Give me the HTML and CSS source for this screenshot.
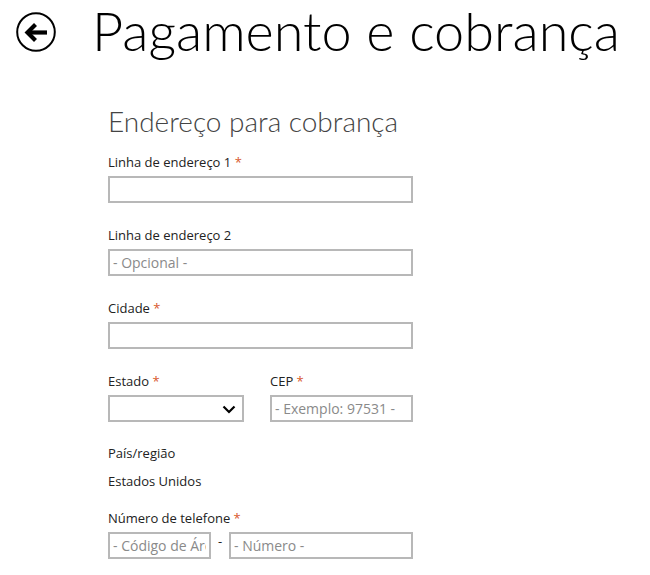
FILE: index.html
```html
<!DOCTYPE html>
<html lang="pt">
<head>
<meta charset="utf-8">
<title>Pagamento e cobrança</title>
<link rel="stylesheet" href="styles.css">
</head>
<body>
<header class="page-header">
  <button class="back-button" aria-label="Voltar">
    <svg width="40" height="40" viewBox="0 0 40 40">
      <circle cx="20" cy="20" r="18.8" fill="none" stroke="#000" stroke-width="2"/>
      <path d="M12 20.5H31" stroke="#000" stroke-width="4.2" fill="none"/>
      <path d="M19.5 12.5L11.5 20.5L19.5 28.5" stroke="#000" stroke-width="4.2" fill="none"/>
    </svg>
  </button>
  <h1 class="page-title">Pagamento e cobrança</h1>
</header>

<main class="form-area">
  <h2 class="section-title">Endereço para cobrança</h2>

  <div class="field">
    <label class="field-label">Linha de endereço 1 <span class="req">*</span></label>
    <input class="text-input" type="text">
  </div>

  <div class="field">
    <label class="field-label">Linha de endereço 2</label>
    <input class="text-input" type="text" placeholder="- Opcional -">
  </div>

  <div class="field">
    <label class="field-label">Cidade <span class="req">*</span></label>
    <input class="text-input" type="text">
  </div>

  <div class="field-row">
    <div class="field state-field">
      <label class="field-label">Estado <span class="req">*</span></label>
      <div class="select-wrap">
        <select class="select-input"><option></option></select>
        <svg class="chevron" width="14" height="10" viewBox="0 0 14 10">
          <path d="M1.5 2.5L7 8L12.5 2.5" fill="none" stroke="#000" stroke-width="2.2"/>
        </svg>
      </div>
    </div>
    <div class="field zip-field">
      <label class="field-label">CEP <span class="req">*</span></label>
      <input class="text-input" type="text" placeholder="- Exemplo: 97531 -">
    </div>
  </div>

  <div class="info">
    <div class="info-label">País/região</div>
    <div class="info-value">Estados Unidos</div>
  </div>

  <div class="field">
    <label class="field-label">Número de telefone <span class="req">*</span></label>
    <div class="phone-row">
      <input class="text-input area-input" type="text" placeholder="- Código de Área -">
      <span class="dash">-</span>
      <input class="text-input number-input" type="text" placeholder="- Número -">
    </div>
  </div>
</main>
</body>
</html>
```

FILE: styles.css
```css
* {
  box-sizing: border-box;
}

html, body {
  margin: 0;
  padding: 0;
  background: #fff;
}

body {
  font-family: "Open Sans", "Noto Sans", "Liberation Sans", sans-serif;
  color: #222;
}

.page-header {
  display: flex;
  align-items: flex-start;
  padding: 1px 0 0 16px;
}

.back-button {
  width: 40px;
  height: 40px;
  margin-top: 11px;
  padding: 0;
  border: 0;
  background: none;
  display: block;
  flex: none;
}

.back-button svg {
  display: block;
}

.page-title {
  margin: 0 0 0 36px;
  font-family: "Lato", "Open Sans", sans-serif;
  font-size: 54px;
  line-height: 60px;
  font-weight: 300;
  color: #000;
}

.form-area {
  padding-left: 108px;
  width: 413px;
  box-sizing: content-box;
}

.section-title {
  margin: 43px 0 15px 0;
  font-family: "Lato", "Open Sans", sans-serif;
  font-size: 28px;
  line-height: 34px;
  font-weight: 300;
  color: #444;
}

.field {
  display: flex;
  flex-direction: column;
  margin-bottom: 23px;
}

.field-label {
  font-size: 13px;
  line-height: 18px;
  margin-bottom: 5px;
  color: #222;
}

.req {
  color: #d8582c;
}

.text-input,
.select-input {
  height: 27px;
  border: 2px solid #b8b8b8;
  border-radius: 0;
  padding: 0 3px;
  font-family: inherit;
  font-size: 14px;
  color: #222;
  background: #fff;
  outline: none;
  width: 305px;
}

.text-input::placeholder {
  color: #8a8a8a;
  opacity: 1;
}

.field-row {
  display: flex;
  gap: 26px;
}

.field-row .field {
  margin-bottom: 22px;
}

.state-field .select-wrap {
  position: relative;
  width: 136px;
}

.select-input {
  width: 136px;
  -webkit-appearance: none;
  appearance: none;
  display: block;
}

.chevron {
  position: absolute;
  right: 8px;
  top: 9px;
}

.zip-field .text-input {
  width: 143px;
}

.info {
  margin-bottom: 19px;
  font-size: 13px;
  line-height: 18px;
}

.info-label {
  margin-bottom: 10px;
}

.phone-row {
  display: flex;
  align-items: flex-start;
}

.area-input.text-input {
  width: 103px;
}

.dash {
  width: 18px;
  text-align: center;
  font-size: 13px;
  line-height: 18px;
}

.number-input.text-input {
  width: 184px;
}
```
